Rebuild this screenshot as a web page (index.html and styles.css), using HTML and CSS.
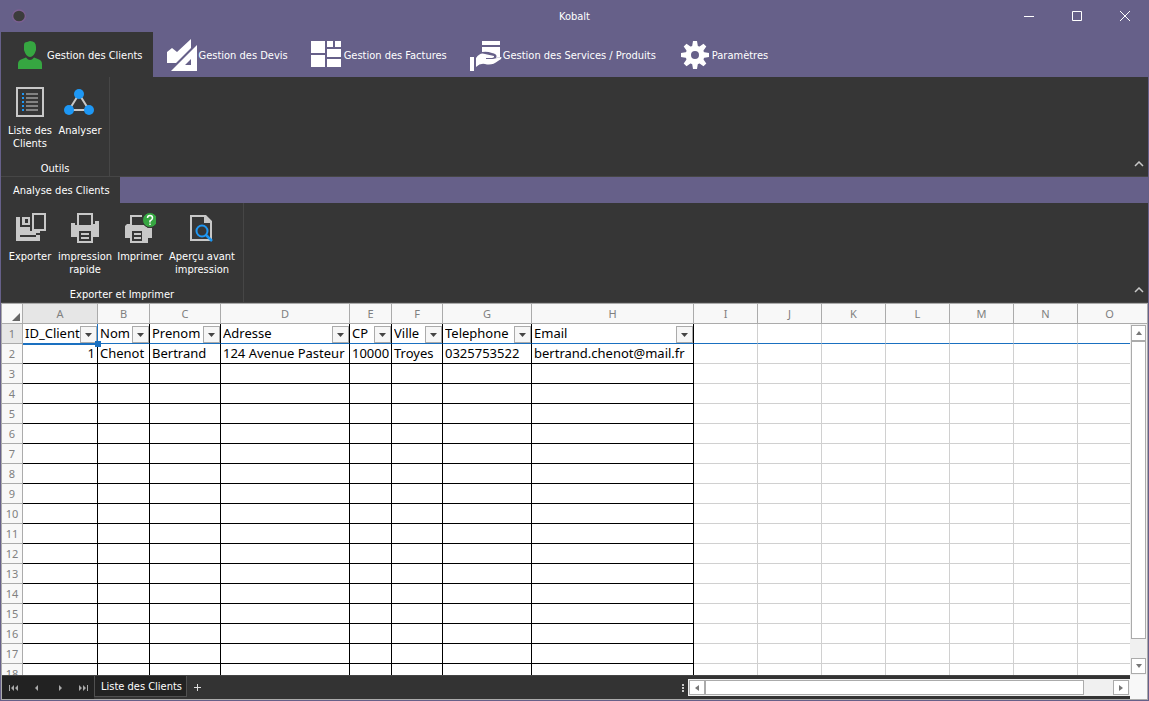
FILE: index.html
```
<!DOCTYPE html>
<html lang="fr">
<head>
<meta charset="utf-8">
<title>Kobalt</title>
<link rel="stylesheet" href="styles.css">
</head>
<body>
<div class="window">
  <header class="titlebar">
    <svg class="app-icon" viewBox="0 0 16 16"><ellipse cx="8" cy="8" rx="6.400" ry="6" fill="#3c3c3c" stroke="#7c6092" stroke-width="1.4"/></svg>
    <h1 class="title">Kobalt</h1>
    <div class="window-buttons">
      <button aria-label="Réduire"><svg viewBox="0 0 10 10"><path d="M0 5.500H10"/></svg></button>
      <button aria-label="Agrandir"><svg viewBox="0 0 10 10"><path d="M.5 .5H9.500V9.500H.5Z"/></svg></button>
      <button aria-label="Fermer"><svg viewBox="0 0 10 10"><path d="M0 0L10 10M10 0L0 10"/></svg></button>
    </div>
  </header>

  <nav class="tabs">
    <button class="tab active"><svg viewBox="0 0 32 32"><path fill="#36a641" d="M4 30V25Q4 21.500 7 20.500L12 18.500Q16 23.500 20 18.500L25 20.500Q28 21.500 28 25V30ZM10 6Q10 3 13 3L16 2Q22 2 22 8V11Q20 18 16 18Q12 18 10 11Z"/></svg><span>Gestion des Clients</span></button>
    <button class="tab"><svg viewBox="0 0 32 32"><path fill="#fff" fill-rule="evenodd" d="M1 13L6 9L11 13L25 0V9L10 24H1ZM5 32L31 6V32ZM19 26H25V20Z"/></svg><span>Gestion des Devis</span></button>
    <button class="tab"><svg viewBox="0 0 32 32"><path fill="#fff" d="M0 2H14V14H0ZM16 2H22V8H16ZM24 2H30V8H24ZM16 10H30V18H16ZM0 16H14V28H0ZM16 20H30V28H16Z"/></svg><span>Gestion des Factures</span></button>
    <button class="tab"><svg viewBox="0 0 32 32"><path fill="#fff" d="M12 2H30V6H12ZM12 8H30V18L26 19Q28 15 22 14Q17 12 12 13ZM0 18H4V32H0ZM6 19Q10 13 15 15L24 17Q24.500 19 22 19H16V20H23L31 18Q33 19 28 22Q22 27 15 25Q10 24 6 28Z"/></svg><span>Gestion des Services / Produits</span></button>
    <button class="tab"><svg viewBox="0 0 32 32"><g fill="#fff"><path fill-rule="evenodd" d="M16 6.500A9.500 9.500 0 1 1 16 25.500A9.500 9.500 0 1 1 16 6.500ZM16 12A4 4 0 1 0 16 20A4 4 0 1 0 16 12Z"/><path id="tooth" d="M13 8L14 2H18L19 8ZM13 24L14 30H18L19 24Z"/><use href="#tooth" transform="rotate(45 16 16)"/><use href="#tooth" transform="rotate(90 16 16)"/><use href="#tooth" transform="rotate(135 16 16)"/></g></svg><span>Paramètres</span></button>
  </nav>

  <section class="ribbon">
    <div class="group">
      <div class="tools">
        <button class="tool"><svg viewBox="0 0 32 32"><path d="M3 3H29V31H3Z" fill="none" stroke="#c8c8c8" stroke-width="2"/><path d="M8 9H10M8 13H10M8 17H10M8 21H10M8 25H10" stroke="#1e98f5" stroke-width="2"/><path d="M12 9H24M12 13H24M12 17H24M12 21H24M12 25H24" stroke="#828282" stroke-width="2"/></svg>Liste des<br>Clients</button>
        <button class="tool"><svg viewBox="0 0 32 32"><path d="M15 9L5 25H25Z" fill="none" stroke="#c8c8c8" stroke-width="2"/><g fill="#1e98f5"><circle cx="15" cy="9" r="5"/><circle cx="5" cy="25" r="5"/><circle cx="25" cy="25" r="5"/></g></svg>Analyser</button>
      </div>
      <div class="group-name">Outils</div>
    </div>
    <button class="collapse" aria-label="Réduire le ruban"><svg viewBox="0 0 10 6"><path d="M1 5L5 1L9 5"/></svg></button>
  </section>

  <nav class="subtabs"><button class="subtab">Analyse des Clients</button></nav>

  <section class="ribbon">
    <div class="group">
      <div class="tools">
        <button class="tool"><svg viewBox="0 0 32 32"><path fill="#c8c8c8" fill-rule="evenodd" d="M2 6H6V16H16V20H26V30H2ZM6 24V26H22V22H26V24ZM8 6H16V14H8ZM11 8V12H14V8ZM18 2H32V20H18ZM20 4V18H30V4Z"/></svg>Exporter</button>
        <button class="tool wide"><svg viewBox="0 0 32 32"><path fill="#c8c8c8" fill-rule="evenodd" d="M8 2H24V13H26V10H30V14V26H24V32H8V26H2V12H6V14H8ZM10 4V14H22V4ZM10 20V30H22V20ZM12 22H20V24H12ZM12 26H20V28H12Z"/></svg>impression<br>rapide</button>
        <button class="tool"><svg viewBox="0 0 32 32"><path fill="#c8c8c8" fill-rule="evenodd" d="M6 4H18V6H8V14H20L24 17H28V27H24V32H6V27H1V15L3 13H6ZM8 20V30H18V20ZM10 22H17V24H10ZM10 26H17V28H10Z"/><circle cx="26" cy="9" r="7.500" fill="#36a641" stroke="#363636"/><path d="M23.500 7Q23.500 4.500 26 4.500T28.500 7Q28.500 8.500 26 10V11.500M26 12.500V14" fill="none" stroke="#fff" stroke-width="1.500"/></svg>Imprimer</button>
        <button class="tool extra"><svg viewBox="0 0 32 32"><path fill="#c8c8c8" fill-rule="evenodd" d="M4 4H20L26 10V30H4ZM6 6V28H24V12H18V6Z"/><circle cx="16" cy="20" r="5.500" fill="#363636" stroke="#1e98f5" stroke-width="2"/><path d="M20 24L26 30" stroke="#1e98f5" stroke-width="2.500"/></svg>Aperçu avant<br>impression</button>
      </div>
      <div class="group-name">Exporter et Imprimer</div>
    </div>
    <button class="collapse" aria-label="Réduire le ruban"><svg viewBox="0 0 10 6"><path d="M1 5L5 1L9 5"/></svg></button>
  </section>

  <main class="sheet">
    <div class="cells">
      <table>
        <colgroup><col class="w-row"><col class="w-a"><col class="w-b"><col class="w-c"><col class="w-d"><col class="w-e"><col class="w-f"><col class="w-g"><col class="w-h"><col span="7" class="w-std"></colgroup>
        <thead><tr><th class="corner"><svg viewBox="0 0 8 8"><path d="M8 0V8H0Z" fill="#666"/></svg></th><th class="current">A</th><th>B</th><th>C</th><th>D</th><th>E</th><th>F</th><th>G</th><th>H</th><th>I</th><th>J</th><th>K</th><th>L</th><th>M</th><th>N</th><th>O</th></tr></thead>
        <tbody id="rows"></tbody>
      </table>
    </div>
    <div class="vbar">
      <div class="vbar-head"></div>
      <div class="vtrack">
        <button aria-label="Défiler vers le haut"><svg viewBox="0 0 8 8"><path d="M1 6L4 2L7 6Z"/></svg></button>
        <div class="vthumb"></div><div class="vspace"></div>
        <button aria-label="Défiler vers le bas"><svg viewBox="0 0 8 8"><path d="M1 2L4 6L7 2Z"/></svg></button>
      </div>
    </div>
    <footer class="bottom">
      <div class="sheet-nav">
        <button aria-label="Première feuille"><svg viewBox="0 0 10 6"><path d="M0 0H1V6H0ZM5 0V6L2 3ZM9 0V6L6 3Z"/></svg></button>
        <button aria-label="Feuille précédente"><svg viewBox="0 0 10 6"><path d="M6 0V6L3 3Z"/></svg></button>
        <button aria-label="Feuille suivante"><svg viewBox="0 0 10 6"><path d="M4 0V6L7 3Z"/></svg></button>
        <button aria-label="Dernière feuille"><svg viewBox="0 0 10 6"><path d="M1 0V6L4 3ZM5 0V6L8 3ZM9 0H10V6H9Z"/></svg></button>
      </div>
      <button class="sheet-tab">Liste des Clients</button>
      <button class="add" aria-label="Ajouter une feuille"><svg viewBox="0 0 7 7"><path d="M0 3.500H7M3.500 0V7"/></svg></button>
      <svg class="grip" viewBox="0 0 2 8"><path d="M0 0H2V2H0ZM0 3H2V5H0ZM0 6H2V8H0Z" fill="#c8c8c8"/></svg>
      <div class="hbar">
        <button aria-label="Défiler à gauche"><svg viewBox="0 0 8 8"><path d="M6 1V7L2 4Z"/></svg></button>
        <div class="hthumb"></div><div class="hspace"></div>
        <button aria-label="Défiler à droite"><svg viewBox="0 0 8 8"><path d="M2 1V7L6 4Z"/></svg></button>
      </div>
    </footer>
    <div class="corner-end"></div>
  </main>
</div>
<script src="sheet.js"></script>
</body>
</html>
```
FILE: sheet.js
```
const head = ["ID_Client", "Nom", "Prenom", "Adresse", "CP", "Ville", "Telephone", "Email"];
const first = ["1", "Chenot", "Bertrand", "124 Avenue Pasteur", "10000", "Troyes", "0325753522", "bertrand.chenot@mail.fr"];
const arrow = '<svg viewBox="0 0 7 4"><path d="M0 0H7L3.500 4Z"/></svg>';
const body = document.getElementById("rows");
for (let r = 1; r <= 18; r++) {
  let html = `<th${r === 1 ? ' class="current"' : ""}>${r}</th>`;
  for (let c = 0; c < 15; c++) {
    const data = c < 8 ? "data" : "";
    if (r === 1 && c < 8) {
      html += `<td class="data${c === 0 ? " selected" : ""}"><div class="field"><span>${head[c]}</span><button class="filter" aria-label="Filtrer ${head[c]}">${arrow}</button></div></td>`;
    } else {
      const text = r === 2 && c < 8 ? first[c] : "";
      html += `<td class="${data}${r === 2 && c === 0 ? " number" : ""}">${text}</td>`;
    }
  }
  const row = document.createElement("tr");
  if (r === 1) row.className = "frozen";
  row.innerHTML = html;
  body.append(row);
}
```
FILE: styles.css
```
* { box-sizing: border-box; }
body { margin: 0; font: 11px/13px "DejaVu Sans Condensed", "Noto Sans", sans-serif; color: #fff; }
button { margin: 0; padding: 0; border: 0; background: none; color: inherit; font: inherit; }
svg { display: block; flex: none; }
.window { display: flex; flex-direction: column; height: 100vh; padding: 0 1px 1px; background: #666089; overflow: hidden; }

.titlebar { display: grid; grid-template-columns: 1fr auto 1fr; align-items: center; height: 32px; }
.app-icon { width: 16px; height: 16px; margin-left: 10px; }
.title { margin: 0; font: inherit; }
.window-buttons { display: flex; justify-content: flex-end; margin-right: -1px; }
.window-buttons button { display: grid; place-items: center; width: 48px; height: 32px; }
.window-buttons svg { width: 10px; height: 10px; fill: none; stroke: #fff; }

.tabs { display: flex; height: 45px; }
.tab { display: flex; align-items: center; gap: 1px; padding: 0 10px 0 13px; white-space: nowrap; }
.tab span { padding-top: 2px; }
.tab svg { width: 32px; height: 32px; }
.tab.active { background: #363636; }

.ribbon { display: flex; justify-content: space-between; align-items: flex-end; height: 100px; background: #363636; border-bottom: 1px solid #464646; }
.group { display: flex; flex-direction: column; justify-content: space-between; height: 99px; padding: 8px 4px 1px; border-right: 1px solid #464646; }
.tools { display: flex; }
.tool { display: flex; flex-direction: column; align-items: center; gap: 7px; width: 50px; white-space: nowrap; }
.tool.wide { width: 60px; }
.tool.extra { width: 74px; }
.tool svg { width: 32px; height: 32px; }
.group-name { text-align: center; }
.collapse { padding: 9px 4px; }
.collapse svg { width: 10px; height: 6px; fill: none; stroke: #c8c8c8; stroke-width: 1.5; }

.subtabs { display: flex; height: 26px; }
.subtab { padding: 0 10px 0 12px; background: #363636; }

.sheet { flex: 1; min-height: 0; display: grid; grid-template-columns: minmax(0, 1fr) 17px; grid-template-rows: minmax(0, 1fr) 24px; background: #fff; border: 1px solid #ababab; }
.cells { overflow: hidden; }
table { table-layout: fixed; width: 1140px; border-collapse: separate; border-spacing: 0; }
.w-row { width: 21px; }
.w-a { width: 75px; }
.w-b { width: 52px; }
.w-c { width: 71px; }
.w-d { width: 129px; }
.w-e { width: 42px; }
.w-f { width: 51px; }
.w-g { width: 89px; }
.w-h { width: 162px; }
.w-std { width: 64px; }
tr { height: 20px; }
th { height: 20px; padding: 0; border: solid #ababab; border-width: 0 1px 1px 0; background: #f8f8f8; color: #808080; font: 11px/19px "Noto Sans", sans-serif; text-align: center; }
th.current { background: #e6e6e6; }
.corner svg { width: 8px; height: 8px; margin: 7px 0 0 10px; }
td { height: 20px; padding: 0 2px; border: solid #d0d0d0; border-width: 0 1px 1px 0; color: #000; font: 13px/19px "Noto Sans", sans-serif; white-space: nowrap; }
td.data { border-color: #000; }
td.number { text-align: right; }
.frozen td { border-bottom-color: #1a70c0; padding-right: 0; }
.frozen .selected { position: relative; border-right-color: #1a70c0; }
.selected::after { content: ""; position: absolute; left: 0; right: 0; bottom: -2px; height: 2px; background: #1a70c0; }
.selected::before { content: ""; position: absolute; z-index: 1; right: -4px; bottom: -4px; width: 6px; height: 6px; background: #1a70c0; }
.field { display: flex; justify-content: space-between; align-items: flex-end; height: 19px; overflow: hidden; }
.field span { flex: 1; min-width: 0; overflow: hidden; }
.filter { flex: none; display: grid; place-items: center; width: 17px; height: 17px; border: 1px solid #ababab; background: #f6f6f6; }
.filter svg { width: 7px; height: 4px; fill: #444; }

.vbar { display: flex; flex-direction: column; background: #f0f0f0; }
.vbar-head { height: 20px; background: #f8f8f8; border-bottom: 1px solid #ababab; }
.vtrack { flex: 1; display: flex; flex-direction: column; padding: 1px; }
.vtrack button, .hbar button { display: grid; place-items: center; width: 15px; height: 16px; border: 1px solid #ababab; background: #fff; }
.vtrack button svg, .hbar button svg { width: 8px; height: 8px; fill: #777; }
.vthumb { flex: 298; border: 1px solid #ababab; background: #fff; }
.vspace { flex: 19; }
.corner-end { background: #f8f8f8; }

.bottom { display: flex; align-items: stretch; background: #333; border-top: 1px solid #444; }
.sheet-nav { display: flex; background: #222; }
.sheet-nav button { display: grid; place-items: center; width: 23px; }
.sheet-nav svg { width: 10px; height: 6px; fill: #aaa; }
.sheet-tab { height: 21px; padding: 1px 4px 0 6px; border: 1px solid #505050; border-top: 0; background: #222; }
.add { width: 21px; display: grid; place-items: center; }
.add svg { width: 7px; height: 7px; stroke: #ddd; }
.grip { width: 2px; height: 8px; margin: auto 4px auto auto; }
.hbar { display: flex; width: 442px; max-width: 50%; height: 17px; margin-top: 3px; padding: 1px; background: #f0f0f0; }
.hbar button { height: 15px; width: 16px; }
.hthumb { flex: 379; border: 1px solid #ababab; background: #fff; }
.hspace { flex: 29; }
```
